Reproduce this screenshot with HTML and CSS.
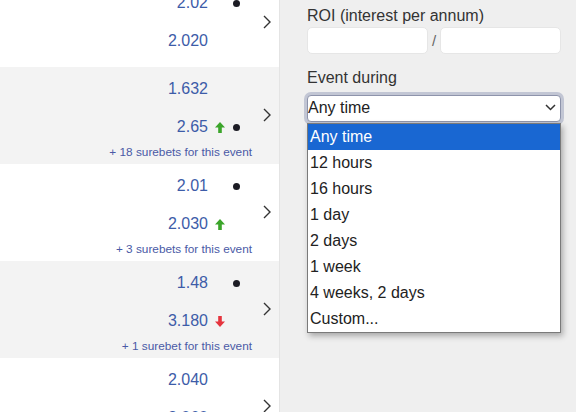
FILE: index.html
```html
<!DOCTYPE html>
<html lang="en">
<head>
<meta charset="utf-8">
<title>Surebets</title>
<link rel="stylesheet" href="styles.css">
</head>
<body>
<div class="page">
  <div class="list">
    <div class="row row--plain row--first">
      <div class="odds">
        <div class="line"><span class="val">2.02</span><span class="trend"></span><span class="dot-slot"><i class="dot"></i></span></div>
        <div class="line"><span class="val">2.020</span><span class="trend"></span><span class="dot-slot"></span></div>
      </div>
      <div class="go"><svg class="chev" viewBox="0 0 8 14" width="8" height="14"><path d="M1 1 L7 7 L1 13"/></svg></div>
    </div>
    <div class="row row--alt">
      <div class="odds">
        <div class="line"><span class="val">1.632</span><span class="trend"></span><span class="dot-slot"></span></div>
        <div class="line"><span class="val">2.65</span><span class="trend"><svg class="arrow up" viewBox="0 0 10 11" width="10" height="11"><path d="M5 0 L10 5.5 H6.8 V11 H3.2 V5.5 H0 Z"/></svg></span><span class="dot-slot"><i class="dot"></i></span></div>
        <div class="more">+ 18 surebets for this event</div>
      </div>
      <div class="go"><svg class="chev" viewBox="0 0 8 14" width="8" height="14"><path d="M1 1 L7 7 L1 13"/></svg></div>
    </div>
    <div class="row">
      <div class="odds">
        <div class="line"><span class="val">2.01</span><span class="trend"></span><span class="dot-slot"><i class="dot"></i></span></div>
        <div class="line"><span class="val">2.030</span><span class="trend"><svg class="arrow up" viewBox="0 0 10 11" width="10" height="11"><path d="M5 0 L10 5.5 H6.8 V11 H3.2 V5.5 H0 Z"/></svg></span><span class="dot-slot"></span></div>
        <div class="more">+ 3 surebets for this event</div>
      </div>
      <div class="go"><svg class="chev" viewBox="0 0 8 14" width="8" height="14"><path d="M1 1 L7 7 L1 13"/></svg></div>
    </div>
    <div class="row row--alt">
      <div class="odds">
        <div class="line"><span class="val">1.48</span><span class="trend"></span><span class="dot-slot"><i class="dot"></i></span></div>
        <div class="line"><span class="val">3.180</span><span class="trend"><svg class="arrow down" viewBox="0 0 10 11" width="10" height="11"><path d="M5 11 L10 5.5 H6.8 V0 H3.2 V5.5 H0 Z"/></svg></span><span class="dot-slot"></span></div>
        <div class="more">+ 1 surebet for this event</div>
      </div>
      <div class="go"><svg class="chev" viewBox="0 0 8 14" width="8" height="14"><path d="M1 1 L7 7 L1 13"/></svg></div>
    </div>
    <div class="row">
      <div class="odds">
        <div class="line"><span class="val">2.040</span><span class="trend"></span><span class="dot-slot"></span></div>
        <div class="line"><span class="val">2.060</span><span class="trend"><svg class="arrow up" viewBox="0 0 10 11" width="10" height="11"><path d="M5 0 L10 5.5 H6.8 V11 H3.2 V5.5 H0 Z"/></svg></span><span class="dot-slot"></span></div>
        <div class="more">+ 2 surebets for this event</div>
      </div>
      <div class="go"><svg class="chev" viewBox="0 0 8 14" width="8" height="14"><path d="M1 1 L7 7 L1 13"/></svg></div>
    </div>
  </div>

  <div class="filters">
    <div class="label label--first">ROI (interest per annum)</div>
    <div class="range">
      <div class="input"></div>
      <span class="slash">/</span>
      <div class="input"></div>
    </div>
    <div class="label label--second">Event during</div>
    <div class="select-wrap">
      <div class="select">
        <span class="select-text">Any time</span>
        <svg class="select-chev" viewBox="0 0 11 7" width="11" height="7"><path d="M1 1 L5.5 5.5 L10 1"/></svg>
      </div>
      <div class="dropdown">
        <div class="opt opt--active">Any time</div>
        <div class="opt">12 hours</div>
        <div class="opt">16 hours</div>
        <div class="opt">1 day</div>
        <div class="opt">2 days</div>
        <div class="opt">1 week</div>
        <div class="opt">4 weeks, 2 days</div>
        <div class="opt">Custom...</div>
      </div>
    </div>
  </div>
</div>
</body>
</html>
```
FILE: styles.css
```css
html, body {
  margin: 0;
  padding: 0;
}
body {
  width: 576px;
  height: 412px;
  overflow: hidden;
  background: #efefef;
  font-family: "Liberation Sans", Arial, sans-serif;
}
.page {
  display: flex;
  align-items: flex-start;
  height: 412px;
  overflow: hidden;
}

/* left list */
.list {
  width: 279px;
  flex: none;
  border-right: 1px solid #e4e4e4;
  background: #fff;
}
.row {
  display: flex;
  align-items: center;
  padding: 3px 0 5px;
  background: #fff;
}
.row--plain {
  padding-bottom: 7px;
}
.row--first {
  margin-top: -19px;
}
.row--alt {
  background: #f3f3f3;
}
.odds {
  width: 252px;
  flex: none;
}
.line {
  display: flex;
  justify-content: flex-end;
  align-items: center;
  height: 38px;
  padding-right: 12px;
  font-size: 16px;
  line-height: 38px;
}
.val {
  color: #3d5ca8;
}
.trend {
  width: 17px;
  margin-left: 7px;
  height: 11px;
  display: flex;
}
.arrow.up path {
  fill: #3ba52a;
}
.arrow.down path {
  fill: #e5343d;
}
.dot-slot {
  width: 8px;
  height: 7px;
  display: flex;
  justify-content: flex-end;
}
.dot {
  display: block;
  width: 7px;
  height: 7px;
  border-radius: 50%;
  background: #1c1c24;
}
.more {
  text-align: right;
  font-size: 11.8px;
  line-height: 13px;
  color: #4a5aa6;
}
.go {
  flex: 1;
  display: flex;
  align-items: center;
  padding-left: 11px;
}
.chev path {
  fill: none;
  stroke: #333;
  stroke-width: 1.4;
}

/* right filters */
.filters {
  width: 254px;
  padding: 6px 15px 0 27px;
  color: #333;
  font-size: 16px;
}
.label {
  line-height: 19px;
}
.label--second {
  margin-top: 14px;
}
.range {
  display: flex;
  align-items: center;
  margin-top: 2px;
}
.input {
  width: 121px;
  height: 27px;
  box-sizing: border-box;
  background: #fff;
  border: 1px solid #e6e6e6;
  border-radius: 5px;
}
.slash {
  width: 12px;
  text-align: center;
  color: #666;
  font-size: 15px;
}
.select-wrap {
  position: relative;
  margin-top: 8px;
}
.select {
  height: 27px;
  box-sizing: border-box;
  display: flex;
  align-items: center;
  justify-content: space-between;
  padding: 0 4px 2px 0;
  background: #fff;
  border: 1px solid #8e94ab;
  border-radius: 4px;
  box-shadow: 0 0 0 3px #c2c6d4;
  color: #222;
}
.select-text {
  line-height: 19px;
}
.select-chev path {
  fill: none;
  stroke: #333;
  stroke-width: 1.5;
}
.dropdown {
  position: absolute;
  left: 0;
  top: 28px;
  width: 254px;
  box-sizing: border-box;
  background: #fff;
  border: 1px solid #7a7a7a;
  box-shadow: 2px 3px 6px rgba(0, 0, 0, 0.3);
}
.opt {
  height: 26px;
  line-height: 26px;
  padding-left: 2px;
  color: #222;
}
.opt--active {
  background: #1967d2;
  color: #fff;
}
```
